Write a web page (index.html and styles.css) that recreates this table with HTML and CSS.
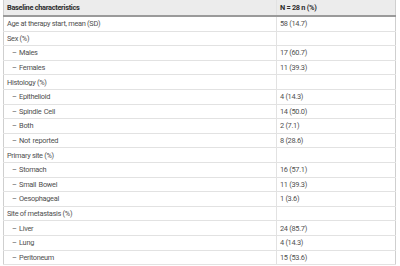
FILE: index.html
```html
<!DOCTYPE html>
<html>
<head>
<meta charset="utf-8">
<link rel="stylesheet" href="styles.css">
</head>
<body>
<table class="tbl">
  <thead>
    <tr><th class="c1">Baseline characteristics</th><th class="c2">N = 28 n (%)</th></tr>
  </thead>
  <tbody>
    <tr><td>Age at therapy start, mean (SD)</td><td>58 (14.7)</td></tr>
    <tr><td>Sex (%)</td><td></td></tr>
    <tr><td class="sub">– Males</td><td>17 (60.7)</td></tr>
    <tr><td class="sub">– Females</td><td>11 (39.3)</td></tr>
    <tr><td>Histology (%)</td><td></td></tr>
    <tr><td class="sub">– Epithelioid</td><td>4 (14.3)</td></tr>
    <tr><td class="sub">– Spindle Cell</td><td>14 (50.0)</td></tr>
    <tr><td class="sub">– Both</td><td>2 (7.1)</td></tr>
    <tr><td class="sub">– Not reported</td><td>8 (28.6)</td></tr>
    <tr><td>Primary site (%)</td><td></td></tr>
    <tr><td class="sub">– Stomach</td><td>16 (57.1)</td></tr>
    <tr><td class="sub">– Small Bowel</td><td>11 (39.3)</td></tr>
    <tr><td class="sub">– Oesophageal</td><td>1 (3.6)</td></tr>
    <tr><td>Site of metastasis (%)</td><td></td></tr>
    <tr><td class="sub">– Liver</td><td>24 (85.7)</td></tr>
    <tr><td class="sub">– Lung</td><td>4 (14.3)</td></tr>
    <tr><td class="sub">– Peritoneum</td><td>15 (53.6)</td></tr>
  </tbody>
</table>
</body>
</html>
```
FILE: styles.css
```css
html, body {
  margin: 0;
  padding: 0;
  background: #fff;
}
body {
  padding: 0 4px 0 3px;
  font-family: Roboto, "Liberation Sans", sans-serif;
  overflow: hidden;
}
.tbl {
  width: 393px;
  border-collapse: collapse;
  border-left: 1px solid #cfcfcf;
  border-right: 1px solid #cfcfcf;
  font-size: 7.4px;
  color: #505050;
  letter-spacing: -0.3px;
}
.tbl th {
  background: #ececec;
  color: #2e2e2e;
  font-weight: bold;
  text-align: left;
  height: 15px;
  padding: 0 0 0 3px;
  border-bottom: 2px solid #9a9a9a;
}
.tbl td {
  height: 13.6px;
  padding: 0 0 0 3px;
  border-bottom: 1px solid #e2e2e2;
  vertical-align: middle;
}
.tbl .c1 { width: 269px; }
.tbl td:first-child, .tbl th:first-child {
  border-right: 1px solid #e2e2e2;
}
.tbl td.sub { padding-left: 8px; word-spacing: 1px; }
```
